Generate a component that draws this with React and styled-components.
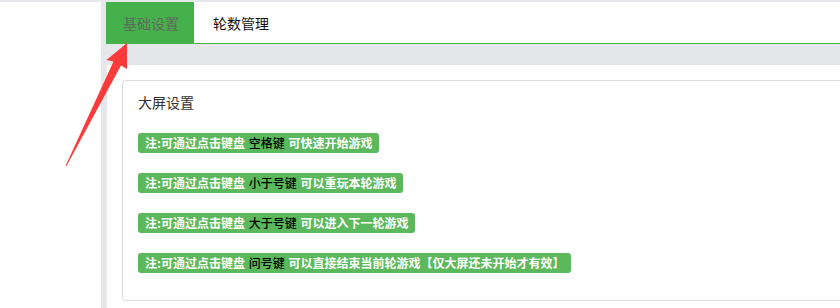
import React from "react";
import styled, { createGlobalStyle } from "styled-components";

const Global = createGlobalStyle`
  html, body { margin: 0; padding: 0; background: #fff; }
  body { font-family: "Noto Sans CJK SC", "Microsoft YaHei", "Liberation Sans", sans-serif; }
`;

const GRAY = "#e6e7ea";
const GREEN = "#45b14b";

const Page = styled.div`
  position: relative;
  height: 306px;
  border-top: 2px solid ${GRAY};
  display: grid;
  grid-template-columns: 101px 1fr;
  overflow: hidden;
`;

const Sidebar = styled.aside`
  background: #fff;
`;

const Main = styled.main`
  background: ${GRAY};
  padding-left: 5px;
  display: flex;
  flex-direction: column;
  min-width: 0;
`;

const TabBar = styled.nav`
  height: 41px;
  background: #fff;
  border-bottom: 1px solid ${GREEN};
  display: flex;
  align-items: stretch;
  gap: 3px;
`;

const Tab = styled.div`
  display: flex;
  align-items: center;
  padding: 0 ${(p) => (p.$active ? "15px 0 17px" : "16px")};
  font-size: 14px;
  color: ${(p) => (p.$active ? "#5f6b5f" : "#111")};
  background: ${(p) => (p.$active ? GREEN : "transparent")};
  cursor: pointer;
`;

const Panel = styled.section`
  margin-top: 20px;
  flex: 1;
  background: #fff;
  border-top: 1px solid #e2e2e2;
  border-left: 1px solid #e8e8e8;
  padding: 15px 0 0 15px;
`;

const Card = styled.div`
  border: 1px solid #dcdcdc;
  border-right: none;
  border-radius: 4px 0 0 4px;
  padding: 11px 15px 27px;
`;

const Title = styled.div`
  font-size: 14px;
  line-height: 20px;
  height: 20px;
  color: #333;
`;

const Row = styled.div`
  display: flex;
  margin-top: ${(p) => (p.$first ? "21px" : "20px")};
  height: 20px;
`;

const Badge = styled.span`
  display: inline-block;
  background: #5cb85c;
  color: #fff;
  font-weight: bold;
  font-size: 12px;
  line-height: 20px;
  height: 20px;
  padding: 0 7px;
  border-radius: 3px;
  white-space: nowrap;
  word-spacing: 1px;
`;

const Key = styled.span`
  color: #000;
  font-weight: 500;
`;

const ArrowSvg = styled.svg`
  position: absolute;
  left: 0;
  top: -2px;
  pointer-events: none;
`;

const notes = [
  { key: "空格键", rest: "可快速开始游戏" },
  { key: "小于号键", rest: "可以重玩本轮游戏" },
  { key: "大于号键", rest: "可以进入下一轮游戏" },
  { key: "问号键", rest: "可以直接结束当前轮游戏【仅大屏还未开始才有效】" },
];

export default function App() {
  return (
    <>
      <Global />
      <Page>
        <Sidebar />
        <Main>
          <TabBar>
            <Tab $active>基础设置</Tab>
            <Tab>轮数管理</Tab>
          </TabBar>
          <Panel>
            <Card>
              <Title>大屏设置</Title>
              {notes.map((n, i) => (
                <Row key={i} $first={i === 0}>
                  <Badge>
                    注:可通过点击键盘 <Key>{n.key}</Key> {n.rest}
                  </Badge>
                </Row>
              ))}
            </Card>
          </Panel>
        </Main>
        <ArrowSvg width="840" height="308" viewBox="0 0 840 308">
          <polygon
            points="127,43 127,69 121,65.5 66.5,166 65.5,166 113.5,61.5 106.5,60"
            fill="#fb3b3b"
          />
        </ArrowSvg>
      </Page>
    </>
  );
}
